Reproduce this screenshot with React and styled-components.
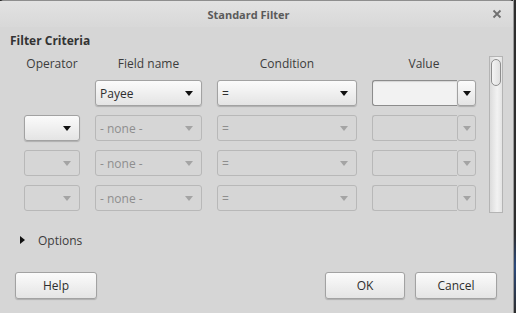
import React from 'react';
import styled, { createGlobalStyle, css } from 'styled-components';

const GlobalStyle = createGlobalStyle`
    html, body {
        margin: 0;
        padding: 0;
        background: #2b2b2b;
    }
    body {
        font-family: "Open Sans", "Noto Sans", sans-serif;
        font-size: 12px;
        color: #3c3c3c;
    }
`;

const Page = styled.div`
    display: flex;
    width: 516px;
    height: 313px;
    overflow: hidden;
`;

const Desktop = styled.div`
    flex: 1;
    background: linear-gradient(#2e2e2e 0%, #2e2e2e 75%, #2c4a7c 85%, #2e2e2e 100%);
    border-left: 1px solid #9a9a9a;
`;

const Dialog = styled.div`
    width: 513px;
    height: 313px;
    flex-shrink: 0;
    display: flex;
    flex-direction: column;
    background: #d6d6d6;
    border-top: 1px solid #8e8e8e;
    border-top-left-radius: 4px;
    border-top-right-radius: 4px;
    box-sizing: border-box;
`;

const TitleBar = styled.div`
    height: 26px;
    display: flex;
    align-items: center;
    padding: 0 8px;
    background: linear-gradient(#e2e2e2, #d8d8d8);
    flex-shrink: 0;
`;

const Title = styled.div`
    flex: 1;
    text-align: center;
    font-weight: bold;
    color: #5a5a5a;
    font-size: 11px;
`;

const CloseButton = styled.div`
    width: 16px;
    height: 16px;
    display: flex;
    align-items: center;
    justify-content: center;
`;

const Body = styled.div`
    flex: 1;
    display: flex;
    flex-direction: column;
    padding: 0 10px;
`;

const SectionTitle = styled.div`
    font-weight: bold;
    height: 18px;
    line-height: 18px;
    margin-top: 5px;
    color: #333;
`;

const CriteriaArea = styled.div`
    display: flex;
    align-items: flex-start;
`;

const Grid = styled.div`
    display: grid;
    grid-template-columns: 56px 107px 140px 104px;
    grid-template-rows: 21px repeat(4, 26px);
    column-gap: 15px;
    row-gap: 9px;
    padding-left: 14px;
    flex-shrink: 0;
`;

const HeaderCell = styled.div`
    box-sizing: border-box;
    text-align: center;
    line-height: 16px;
    padding-top: 6px;
`;

const controlLook = css`
    box-sizing: border-box;
    height: 26px;
    border-radius: 3px;
    border: 1px solid ${p => (p.$disabled ? '#b8b8b8' : '#a2a2a2')};
    background: ${p => (p.$disabled ? '#d6d6d6' : 'linear-gradient(#fbfbfb, #e4e4e4)')};
    box-shadow: ${p => (p.$disabled ? 'none' : '0 1px 1px rgba(0,0,0,0.18)')};
    color: ${p => (p.$disabled ? '#8e8e8e' : '#2e2e2e')};
`;

const Select = styled.div`
    ${controlLook}
    display: flex;
    align-items: center;
    padding: 0 8px 0 4px;
`;

const SelectText = styled.span`
    flex: 1;
    white-space: nowrap;
`;

const Arrow = styled.span`
    width: 0;
    height: 0;
    border-left: 4px solid transparent;
    border-right: 4px solid transparent;
    border-top: 5px solid ${p => (p.$disabled ? '#a4a4a4' : '#111')};
`;

const ValueBox = styled.div`
    display: flex;
`;

const ValueInput = styled.div`
    box-sizing: border-box;
    flex: 1;
    height: 26px;
    border: 1px solid ${p => (p.$disabled ? '#b8b8b8' : '#8c8c8c')};
    border-right: none;
    border-radius: 3px 0 0 3px;
    background: ${p => (p.$disabled ? '#d6d6d6' : '#f2f2f2')};
    box-shadow: ${p => (p.$disabled ? 'none' : 'inset 0 1px 1px rgba(0,0,0,0.12)')};
`;

const ValueButton = styled.div`
    ${controlLook}
    width: 19px;
    display: flex;
    align-items: center;
    justify-content: center;
`;

const Scrollbar = styled.div`
    margin: 6px 0 0 13px;
    width: 14px;
    height: 157px;
    flex-shrink: 0;
    box-sizing: border-box;
    border: 1px solid #b4b4b4;
    background: linear-gradient(90deg, #dcdcdc, #f2f2f2 60%, #e4e4e4);
    padding: 2px 1px;
`;

const Thumb = styled.div`
    height: 27px;
    box-sizing: border-box;
    border: 1px solid #8e8e8e;
    border-radius: 5px;
    background: linear-gradient(90deg, #f4f4f4, #e0e0e0);
`;

const OptionsRow = styled.div`
    display: flex;
    align-items: center;
    margin-top: 18px;
    padding-left: 10px;
    height: 18px;
`;

const Expander = styled.span`
    width: 0;
    height: 0;
    border-top: 4px solid transparent;
    border-bottom: 4px solid transparent;
    border-left: 5px solid #111;
    margin-right: 13px;
`;

const ButtonBar = styled.div`
    display: flex;
    gap: 10px;
    margin-top: 23px;
    padding: 0 6px 0 5px;
`;

const Spacer = styled.div`
    flex: 1;
`;

const Button = styled.div`
    ${controlLook}
    width: ${p => p.$width || 82}px;
    height: 27px;
    display: flex;
    align-items: center;
    justify-content: center;
    color: #2e2e2e;
`;

const rows = [
    { op: null, field: 'Payee', cond: '=', disabled: false },
    { op: '', field: '- none -', cond: '=', disabled: true, opEnabled: true },
    { op: '', field: '- none -', cond: '=', disabled: true },
    { op: '', field: '- none -', cond: '=', disabled: true },
];

function Dropdown({ text, disabled }) {
    return (
        <Select $disabled={disabled}>
            <SelectText>{text}</SelectText>
            <Arrow $disabled={disabled} />
        </Select>
    );
}

export default function App() {
    return (
        <>
            <GlobalStyle />
            <Page>
                <Dialog>
                    <TitleBar>
                        <Title>Standard Filter</Title>
                        <CloseButton>
                            <svg width="10" height="10" viewBox="0 0 10 10">
                                <path d="M1.5 1.5 L8.5 8.5 M8.5 1.5 L1.5 8.5" stroke="#707070" strokeWidth="1.8" />
                            </svg>
                        </CloseButton>
                    </TitleBar>
                    <Body>
                        <SectionTitle>Filter Criteria</SectionTitle>
                        <CriteriaArea>
                            <Grid>
                                <HeaderCell>Operator</HeaderCell>
                                <HeaderCell>Field name</HeaderCell>
                                <HeaderCell>Condition</HeaderCell>
                                <HeaderCell>Value</HeaderCell>
                                {rows.map((row, i) => (
                                    <React.Fragment key={i}>
                                        {row.op === null
                                            ? <div />
                                            : <Dropdown text="" disabled={!row.opEnabled} />}
                                        <Dropdown text={row.field} disabled={row.disabled} />
                                        <Dropdown text={row.cond} disabled={row.disabled} />
                                        <ValueBox>
                                            <ValueInput $disabled={row.disabled} />
                                            <ValueButton $disabled={row.disabled}>
                                                <Arrow $disabled={row.disabled} />
                                            </ValueButton>
                                        </ValueBox>
                                    </React.Fragment>
                                ))}
                            </Grid>
                            <Scrollbar>
                                <Thumb />
                            </Scrollbar>
                        </CriteriaArea>
                        <OptionsRow>
                            <Expander />
                            Options
                        </OptionsRow>
                        <ButtonBar>
                            <Button>Help</Button>
                            <Spacer />
                            <Button $width={80}>OK</Button>
                            <Button>Cancel</Button>
                        </ButtonBar>
                    </Body>
                </Dialog>
                <Desktop />
            </Page>
        </>
    );
}
